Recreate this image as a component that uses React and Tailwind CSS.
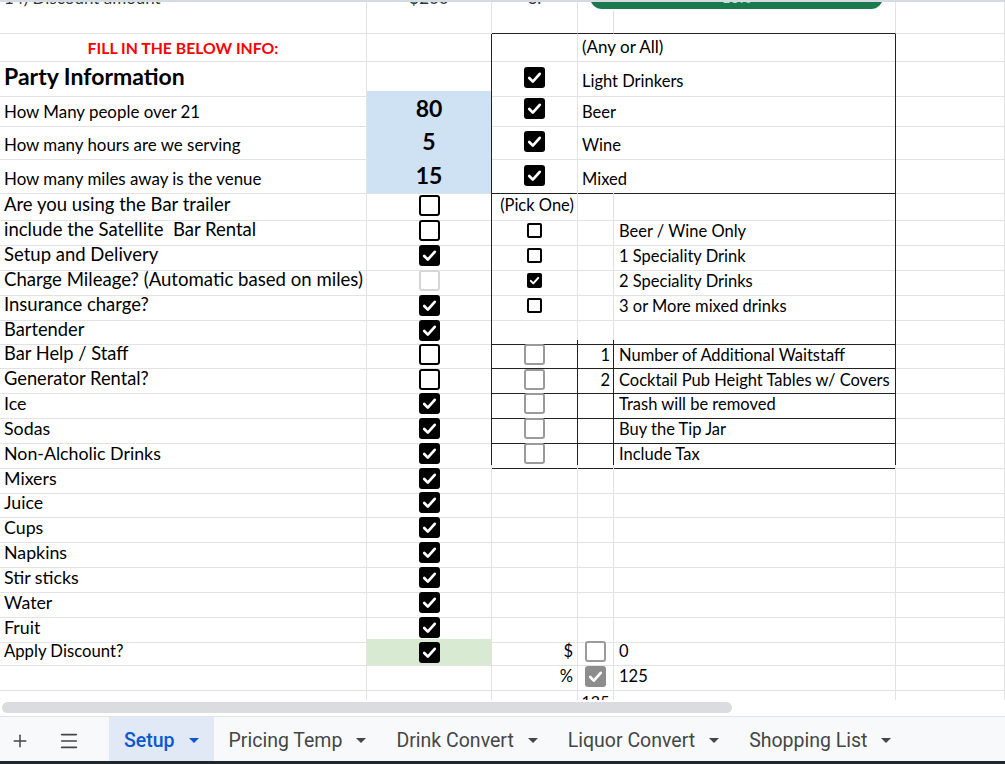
import { Plus, Menu } from "lucide-react";

const GRID = "grid grid-cols-[367px_125px_86px_36px_282px_1fr]";

const Cell = ({ children, rb, bb, span, className = "" }) => (
    <div
        className={`flex min-w-0 whitespace-pre border-r border-b ${rb ? "border-r-[#222]" : "border-r-[#e3e3e3]"} ${
            bb ? "border-b-[#222]" : "border-b-[#e3e3e3]"
        } ${span ? "col-span-2" : ""} ${className}`}
    >
        {children}
    </div>
);

const Tick = () => (
    <svg viewBox="0 0 20 20" className="w-full h-full">
        <path d="M5 10.5l3.4 3.4 6.6-7.4" fill="none" stroke="white" strokeWidth="2.6" strokeLinecap="round" strokeLinejoin="round" />
    </svg>
);

const Box = ({ kind }) => {
    const classMap = {
        on: "w-[21px] h-[21px] rounded-[3px] bg-black",
        off: "w-[21px] h-[21px] rounded-[3px] border-[2.5px] border-black",
        faint: "w-[21px] h-[21px] rounded-[3px] border-[2.5px] border-[#d6d6d6]",
        grayOff: "w-[21px] h-[21px] rounded-[3px] border-[2.5px] border-[#9b9b9b]",
        grayOn: "w-[21px] h-[21px] rounded-[3px] bg-[#8d8d8d]",
        smallOff: "w-[15px] h-[15px] rounded-[2px] border-2 border-black",
        smallOn: "w-[15px] h-[15px] rounded-[2px] bg-black",
    };

    return (
        <div className={classMap[kind]}>
            {(kind === "on" || kind === "grayOn" || kind === "smallOn") && <Tick />}
        </div>
    );
};

const items = [
    ["Are you using the Bar trailer", "off", "text-[18.5px]"],
    ["include the Satellite  Bar Rental", "off", "text-[18.5px]"],
    ["Setup and Delivery", "on", "text-[18.5px]"],
    ["Charge Mileage? (Automatic based on miles)", "faint", "text-[18.6px]"],
    ["Insurance charge?", "on", "text-[18.5px]"],
    ["Bartender", "on", "text-[18.3px]"],
    ["Bar Help / Staff", "off", "text-[18.3px]"],
    ["Generator Rental?", "off", "text-[18.3px]"],
    ["Ice", "on", "text-[17.8px]"],
    ["Sodas", "on", "text-[17.8px]"],
    ["Non-Alcholic Drinks", "on", "text-[17.8px]"],
    ["Mixers", "on", "text-[17.8px]"],
    ["Juice", "on", "text-[17.8px]"],
    ["Cups", "on", "text-[17.8px]"],
    ["Napkins", "on", "text-[17.8px]"],
    ["Stir sticks", "on", "text-[17.8px]"],
    ["Water", "on", "text-[17.8px]"],
    ["Fruit", "on", "text-[17.8px]"],
    ["Apply Discount?", "on", "text-[16.7px]"],
];

// right side of the lower rows, by index
const right = {
    0: { c: <span className="pl-[5px] pb-[2px]">(Pick One)</span> },
    1: { box: "smallOff", e: "Beer / Wine Only" },
    2: { box: "smallOff", e: "1 Speciality Drink" },
    3: { box: "smallOn", e: "2 Speciality Drinks" },
    4: { box: "smallOff", e: "3 or More mixed drinks" },
    5: { bb: true },
    6: { box: "grayOff", d: "1", e: "Number of Additional Waitstaff", all: true },
    7: { box: "grayOff", d: "2", e: "Cocktail Pub Height Tables w/ Covers", all: true },
    8: { box: "grayOff", e: "Trash will be removed", all: true },
    9: { box: "grayOff", e: "Buy the Tip Jar", all: true },
    10: { box: "grayOff", e: "Include Tax", all: true },
};

const heights = (i) => (i === 5 || i === 11 ? "h-[24px]" : "h-[25px]");

const Tab = ({ label, active }) => (
    <div
        className={`flex items-center h-full px-[15px] gap-[14px] ${
            active ? "bg-[#e1e9f7] text-[#0b57d0] font-medium" : "text-[#444746]"
        }`}
    >
        <span className="pt-[3px]">{label}</span>
        <svg width="10" height="5" viewBox="0 0 10 5" className="mt-[2px]">
            <path d="M0 0h10L5 5z" fill={active ? "#0b57d0" : "#444746"} />
        </svg>
    </div>
);

const App = () => {
    return (
        <div className="w-[1005px] h-[764px] overflow-hidden bg-white flex flex-col font-['Lato',sans-serif] text-[16.5px] text-black">
            <div className="h-[700px] overflow-hidden">
                {/* row cut by frozen header */}
                <div className="h-[10px] overflow-hidden border-t-2 border-[#d5dbe3]">
                    <div className={`${GRID} h-[25px] -mt-[17px]`}>
                        <Cell className="items-end pl-[4px] text-[#333] text-[17px]">14) Discount amount</Cell>
                        <Cell className="items-end justify-center text-[#333] text-[17px]">$200</Cell>
                        <Cell className="items-end justify-center text-[#333]">8.</Cell>
                        <Cell span className="items-end px-[12px] pb-[2px]">
                            <div className="w-full h-[22px] rounded-b-[12px] rounded-t-[4px] bg-[#1b7a4d] text-[#b7e1cd] text-[15px] flex items-end justify-center">
                                10%
                            </div>
                        </Cell>
                        <Cell />
                    </div>
                </div>

                <div className={`${GRID} h-[24px]`}>
                    <Cell />
                    <Cell />
                    <Cell bb />
                    <Cell bb />
                    <Cell bb />
                    <Cell />
                </div>

                <div className={`${GRID} h-[25px]`}>
                    <Cell className="items-end justify-center pb-[1px] text-[15.8px] font-bold text-[#ff0000]">
                        FILL IN THE BELOW INFO:
                    </Cell>
                    <Cell rb />
                    <Cell />
                    <Cell span rb className="items-end pl-[4px] pb-[1px] text-[17px]">
                        (Any or All)
                    </Cell>
                    <Cell />
                </div>

                <div className={`${GRID} h-[32px]`}>
                    <Cell className="items-end pl-[4px] pb-[2px] text-[23px] font-bold">Party Information</Cell>
                    <Cell rb />
                    <Cell className="items-center justify-center">
                        <Box kind="on" />
                    </Cell>
                    <Cell span rb className="items-end pl-[4px] pb-[2px]">
                        Light Drinkers
                    </Cell>
                    <Cell />
                </div>

                {[
                    ["How Many people over 21", "80", "Beer", "h-[33px]"],
                    ["How many hours are we serving", "5", "Wine", "h-[34px]"],
                    ["How many miles away is the venue", "15", "Mixed", "h-[33px]"],
                ].map(([label, num, drink, h], i) => (
                    <div key={label} className={`${GRID} ${h}`}>
                        <Cell className="items-end pl-[4px] pb-[1px] text-[16.9px]">{label}</Cell>
                        <Cell rb className="items-center justify-center bg-[#cfe2f3] text-[23px] font-bold">
                            {num}
                        </Cell>
                        <Cell bb={i === 2} className="items-center justify-center">
                            <Box kind="on" />
                        </Cell>
                        <Cell span rb bb={i === 2} className="items-end pl-[4px] pb-[1px]">
                            {drink}
                        </Cell>
                        <Cell />
                    </div>
                ))}

                {items.map(([label, kind, size], i) => {
                    const r = right[i] ?? {};
                    const inTable = i <= 10;
                    const last = i === items.length - 1;

                    return (
                        <div key={label} className={`${GRID} ${heights(i)}`}>
                            <Cell className={`items-end pl-[4px] pb-[1px] ${size}`}>{label}</Cell>
                            <Cell
                                rb={inTable}
                                className={`items-center justify-center ${last ? "bg-[#d9ead3]" : ""}`}
                            >
                                <Box kind={kind} />
                            </Cell>
                            <Cell
                                rb={r.all}
                                bb={r.bb || r.all}
                                className={`${r.c ? "items-end" : "items-center"} ${last ? "justify-end pr-[4px]" : "justify-center"}`}
                            >
                                {r.c}
                                {r.box && <Box kind={r.box} />}
                                {last && <span className="self-end pb-[1px]">$</span>}
                            </Cell>
                            <Cell
                                rb={r.all}
                                bb={r.bb || r.all}
                                className={`pb-[1px] ${last ? "items-center justify-center" : "items-end justify-end pr-[3px]"}`}
                            >
                                {r.d}
                                {last && <Box kind="grayOff" />}
                            </Cell>
                            <Cell rb={inTable} bb={r.bb || r.all} className="items-end pl-[5px] pb-[1px]">
                                {r.e}
                                {last && "0"}
                            </Cell>
                            <Cell />
                        </div>
                    );
                })}

                <div className={`${GRID} h-[25px]`}>
                    <Cell />
                    <Cell />
                    <Cell className="items-end justify-end pr-[4px] pb-[1px]">%</Cell>
                    <Cell className="items-center justify-center">
                        <Box kind="grayOn" />
                    </Cell>
                    <Cell className="items-end pl-[5px] pb-[1px]">125</Cell>
                    <Cell />
                </div>

                <div className={`${GRID} h-[25px]`}>
                    <Cell />
                    <Cell />
                    <Cell />
                    <Cell className="items-end justify-center pb-[1px] text-[16px]">125</Cell>
                    <Cell />
                    <Cell />
                </div>
            </div>

            {/* horizontal scrollbar */}
            <div className="h-[16px] bg-white pt-[2px] pl-[2px]">
                <div className="w-[730px] h-[11px] rounded-full bg-[#dadce0]" />
            </div>

            {/* sheet tabs */}
            <div className="h-[45px] border-t border-[#e1e3e6] bg-[#f8f9fa] flex items-stretch font-['Roboto',sans-serif] text-[19.5px]">
                <div className="w-[40px] pt-[3px] flex items-center justify-center text-[#444746]">
                    <Plus size={20} strokeWidth={1.8} />
                </div>
                <div className="w-[58px] pt-[3px] flex items-center justify-center text-[#444746]">
                    <Menu size={22} strokeWidth={1.8} />
                </div>
                <div className="w-[11px]" />
                <Tab label="Setup" active />
                <Tab label="Pricing Temp" />
                <Tab label="Drink Convert" />
                <Tab label="Liquor Convert" />
                <Tab label="Shopping List" />
            </div>
            <div className="flex-1 bg-[#1f262e]" />
        </div>
    );
};

export default App;
